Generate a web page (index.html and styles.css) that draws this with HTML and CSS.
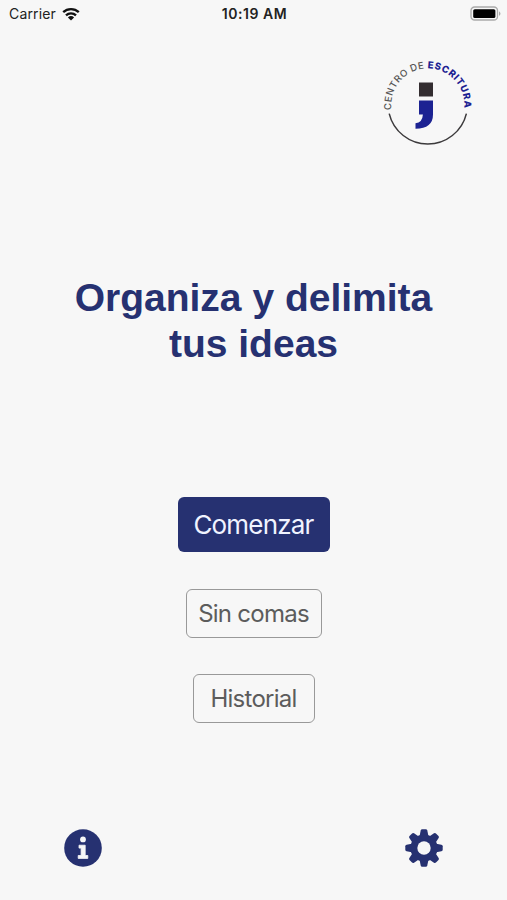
FILE: index.html
```
<!DOCTYPE html>
<html lang="es">
<head>
    <meta charset="UTF-8">
    <meta name="viewport" content="width=device-width, initial-scale=1.0">
    <title>Centro de Escritura</title>
    <link rel="stylesheet" href="styles.css">
</head>
<body>
    <div class="status-bar">
        <div class="carrier">
            <span>Carrier</span>
            <svg class="wifi" viewBox="0 0 18 14">
                <path d="M1.2 5.2a11.2 11.2 0 0 1 15.6 0M4 8.3a7.2 7.2 0 0 1 10 0" fill="none" stroke="#111" stroke-width="2.3"/>
                <path d="M9 13.6L5.9 10.5a4.5 4.5 0 0 1 6.2 0z" fill="#111"/>
            </svg>
        </div>
        <span class="time">10:19 AM</span>
        <div class="battery-box">
            <svg class="battery" viewBox="0 0 32 16">
                <rect x="1" y="1" width="26.5" height="13" rx="3.6" fill="#f7f7f7" stroke="#aaa" stroke-width="1.3"/>
                <rect x="3.2" y="3.2" width="22.2" height="8.8" rx="1.6" fill="#000"/>
                <path d="M29 5.2q3 2.4 0 4.8z" fill="#aaa"/>
            </svg>
        </div>
    </div>

    <header class="header">
        <svg class="logo" viewBox="0 0 100 100">
            <path id="ring" d="M13.5 54.8A36.6 36.6 0 1 1 86.1 54.8" fill="none"/>
            <path d="M11.2 58.6A39.7 39.7 0 0 0 88.4 58.6" fill="none" stroke="#3c3a3c" stroke-width="1.5"/>
            <text class="logo-text"><textPath href="#ring">CENTRO DE <tspan class="logo-bold">ESCRITURA</tspan></textPath></text>
            <path d="M41 27.5h14v14h-14z" fill="#332d30"/>
            <path d="M41 45.5h14v14q0 14-17.5 14.3v-5.6q7-.7 7.4-8.7h-3.9z" fill="#1c2292"/>
        </svg>
    </header>

    <main class="main">
        <h1>Organiza y delimita<br>tus ideas</h1>
        <div class="buttons">
            <button class="btn btn-start">Comenzar</button>
            <button class="btn btn-commas">Sin comas</button>
            <button class="btn btn-history">Historial</button>
        </div>
    </main>

    <footer class="footer">
        <svg class="icon" viewBox="0 0 38 38">
            <circle cx="19" cy="19" r="18.8" fill="#263171"/>
            <circle cx="19" cy="10.4" r="2.9" fill="#f7f7f7"/>
            <path d="M15 16.2h6.2v10.3h2.6v2.9h-9.6v-2.9h2.9v-7.4h-2.1z" fill="#f7f7f7" stroke="#f7f7f7" stroke-width=".8" stroke-linejoin="round"/>
        </svg>
        <svg class="icon" viewBox="0 0 38 38">
            <g fill="#263171">
                <circle cx="19" cy="19" r="13.6"/>
                <g id="teeth">
                    <path id="tooth" d="M14.4 8L15.7 1.6q.3-1.3 1.5-1.3h3.6q1.2 0 1.5 1.3L23.6 8v22l-1.3 6.4q-.3 1.3-1.5 1.3h-3.6q-1.2 0-1.5-1.3L14.4 30z"/>
                    <use href="#tooth" transform="rotate(90 19 19)"/>
                </g>
                <use href="#teeth" transform="rotate(45 19 19)"/>
            </g>
            <circle cx="19" cy="19" r="6.7" fill="#f7f7f7"/>
        </svg>
    </footer>
</body>
</html>
```

FILE: styles.css
```
* {
    margin: 0;
    padding: 0;
    box-sizing: border-box;
}

body {
    font-family: Inter, 'Liberation Sans', sans-serif;
    display: flex;
    flex-direction: column;
    height: 100vh;
    background-color: #f7f7f7;
    overflow: hidden;
}

/* Status bar */
.status-bar {
    display: grid;
    grid-template-columns: 1fr auto 1fr;
    align-items: center;
    height: 27px;
    padding: 0 7px 0 9px;
    font-size: 14px;
    color: #222;
}

.carrier {
    display: flex;
    align-items: center;
    gap: 6px;
    letter-spacing: 0.15px;
}

.wifi {
    width: 18px;
    height: 14px;
}

.time {
    font-weight: 600;
    letter-spacing: 0.55px;
}

.battery-box {
    display: flex;
    justify-content: flex-end;
    margin-right: -2px;
}

.battery {
    width: 32px;
    height: 16px;
}

/* Logo */
.header {
    display: flex;
    justify-content: flex-end;
    padding: 28px 29.5px 0 0;
}

.logo {
    width: 100px;
    height: 100px;
}

.logo-text {
    font-family: Inter, sans-serif;
    font-size: 9.6px;
    font-weight: 500;
    letter-spacing: 0.4px;
    fill: #555;
}

.logo-bold {
    font-weight: 800;
    letter-spacing: 0.6px;
    fill: #1c2292;
}

/* Title and buttons */
.main {
    display: flex;
    flex-direction: column;
    align-items: center;
    padding-top: 120px;
}

h1 {
    font-family: 'Liberation Sans', sans-serif;
    font-size: 39px;
    line-height: 46px;
    text-align: center;
    color: #263171;
}

.buttons {
    display: flex;
    flex-direction: column;
    align-items: center;
    gap: 36.5px;
    margin-top: 130px;
}

.btn {
    height: 49px;
    font-family: Inter, sans-serif;
    font-size: 24px;
    letter-spacing: -0.75px;
    color: #5c5c5c;
    background: none;
    border: 1.5px solid #999;
    border-radius: 6px;
}

.btn-start {
    width: 152px;
    height: 55px;
    font-size: 26px;
    letter-spacing: -0.8px;
    color: #f0f3ff;
    background-color: #263171;
    border: none;
}

.btn-commas {
    width: 136px;
}

.btn-history {
    width: 122px;
}

/* Bottom icons */
.footer {
    display: flex;
    justify-content: space-between;
    margin-top: auto;
    padding: 0 64px 33px;
}

.icon {
    width: 38px;
    height: 38px;
}
```
